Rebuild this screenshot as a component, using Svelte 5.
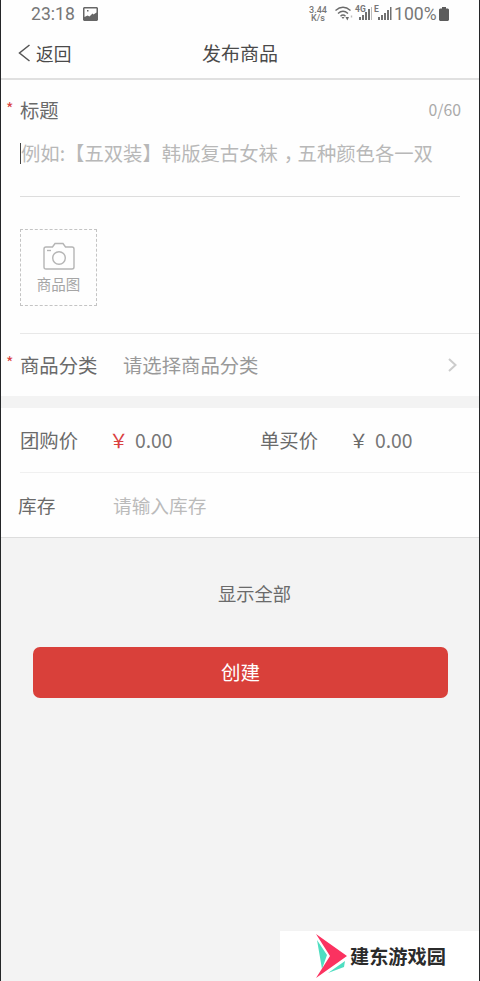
<script lang="ts">
  let title = $state("");
  const maxLength = 60;
</script>

<div class="screen">
  <div class="status">
    <span class="clock">23:18</span>
    <svg class="photo" width="15" height="14" viewBox="0 0 15 14">
      <path fill="#666" fill-rule="evenodd" d="M1 0h13l1 1v12l-1 1H1l-1-1V1zM1.500 1.500v8.500l3-1.500 2 1 3-3 1 1 3-2v-4zM4 3h1.500v1.500H4z" />
    </svg>
    <span class="speed"><span>3.44</span><span>K/s</span></span>
    <svg class="wifi" width="19" height="15" viewBox="0 0 19 15" fill="none" stroke="#6a6a6a" stroke-width="1.4">
      <path d="M.5 4.500Q8-2 15.500 4.500M3 7.500Q8 3 13 7.500M5.500 10.200Q8 7.800 10.500 10.200" />
      <path d="M6.500 11h3L8 13zM10.500 11h3.500l-1.700 3.500z" fill="#6a6a6a" stroke="none" />
      <path d="M16.500 9.500v2" stroke="#bbb" />
    </svg>
    <span class="signal first">
      <span class="net">4G</span>
      <svg width="14" height="13" viewBox="0 0 14 13" fill="#707070">
        <path d="M0 10h2v3H0zM3 8h2v5H3zM6 5h2v8H6zM9 2h2v11H9z" />
        <path d="M12 0h1v13h-1z" fill="#bbb" />
      </svg>
    </span>
    <span class="signal">
      <span class="net">E</span>
      <svg width="14" height="13" viewBox="0 0 14 13" fill="#707070">
        <path d="M0 10h2v3H0zM3 8h2v5H3zM6 6h2v7H6zM9 3h2v10H9zM12 0h1.500v13H12z" />
      </svg>
    </span>
    <span class="percent">100%</span>
    <svg class="battery" width="10" height="14" viewBox="0 0 10 14">
      <path fill="#5c5c5c" d="M3 0h4v1.500h2l1 1V13l-1 1H1l-1-1V2.500l1-1h2z" />
    </svg>
  </div>

  <header class="nav">
    <button class="back" type="button">
      <svg width="13" height="18" viewBox="0 0 13 18" fill="none" stroke="#555" stroke-width="1.5">
        <path d="M11.500 1 1.500 9l10 8" />
      </svg>
      返回
    </button>
    <h1>发布商品</h1>
  </header>

  <section class="details">
    <div class="title-row">
      <span class="star">*</span>
      <span class="label">标题</span>
      <span class="count">{title.length}/{maxLength}</span>
    </div>
    <div class="title-field">
      <span class="caret"></span>例如:【五双装】韩版复古女袜<span class="comma">，</span>五种颜色各一双
    </div>
    <button class="upload" type="button">
      <svg width="32" height="28" viewBox="0 0 32 28" fill="none" stroke="#b5b5b5" stroke-width="1.4">
        <path d="M3 5h6.500l2.500-3.500h8L22.500 5H29q2 0 2 2v18q0 2-2 2H3q-2 0-2-2V7q0-2 2-2z" />
        <circle cx="16" cy="16" r="6.300" />
        <path d="M4 8.500h4" />
      </svg>
      商品图
    </button>
  </section>

  <div class="category">
    <span class="star">*</span>
    <span class="label">商品分类</span>
    <span class="value">请选择商品分类</span>
    <svg width="11" height="14" viewBox="0 0 11 14" fill="none" stroke="#ccc" stroke-width="2">
      <path d="m2 1 6.500 6L2 13" />
    </svg>
  </div>

  <section class="pricing">
    <div class="prices">
      <div class="price">
        <span class="label">团购价</span>
        <span class="yen red">￥</span>
        <span class="amount">0.00</span>
      </div>
      <div class="price">
        <span class="label">单买价</span>
        <span class="yen">￥</span>
        <span class="amount">0.00</span>
      </div>
    </div>
    <div class="stock">
      <span class="stock-label">库存</span>
      <span class="hint">请输入库存</span>
    </div>
  </section>

  <button class="show-all" type="button">显示全部</button>
  <button class="create" type="button">创建</button>

  <div class="brand">
    <svg width="34" height="46" viewBox="0 0 34 46">
      <path fill="#4fdec1" d="M2 7 12 22 7 36zM13 40l17-12-1 6z" />
      <path fill="#fb3260" d="M1 1 32 23 1 45l14-22z" />
    </svg>
    <span>建东游戏园</span>
  </div>
</div>

<style>
  :global(body) {
    background: #f3f3f3;
  }

  .screen {
    position: relative;
    box-sizing: border-box;
    height: 981px;
    border: solid #242628;
    border-width: 0 1px;
    background: #f3f3f3;
    overflow: hidden;
    font-family: "Noto Sans CJK SC", sans-serif;
    font-size: 19.35px;
    line-height: 28px;
    color: #6a6a6a;
    white-space: nowrap;
  }

  button {
    margin: 0;
    padding: 0;
    border: 0;
    background: none;
    font: inherit;
    color: inherit;
  }

  .status {
    display: flex;
    align-items: center;
    box-sizing: border-box;
    height: 27px;
    padding-left: 30px;
    background: #fefefe;
    font-family: Roboto, sans-serif;
    color: #777;
  }

  .clock {
    width: 52px;
    font-size: 17.6px;
  }

  .speed {
    display: flex;
    flex-direction: column;
    align-items: center;
    width: 20px;
    margin: 0 7px 0 210px;
    font-size: 9px;
    font-weight: 500;
  }

  .speed span {
    height: 8px;
    line-height: 8px;
  }

  .signal {
    display: flex;
    align-items: flex-end;
    position: relative;
    width: 20px;
    padding-left: 4px;
    box-sizing: border-box;
  }

  .signal.first {
    width: 19px;
    margin-left: 1px;
  }

  .net {
    position: absolute;
    left: 0;
    top: -2px;
    font-size: 8.5px;
    line-height: 9px;
    font-weight: 700;
  }

  .percent {
    width: 45px;
    font-size: 17.6px;
  }

  .nav {
    display: grid;
    grid-template-columns: 1fr auto 1fr;
    align-items: center;
    box-sizing: border-box;
    height: 53px;
    padding-left: 17px;
    padding-right: 17px;
    border-bottom: 2px solid #e0e0e0;
    background: #fefefe;
    color: #4a4a4a;
  }

  .back {
    display: flex;
    align-items: center;
    gap: 5px;
    font-size: 17.7px;
  }

  h1 {
    margin: 0;
    font-size: 19px;
    font-weight: 400;
  }

  .details {
    height: 253px;
    background: #fefefe;
  }

  .title-row {
    display: flex;
    align-items: center;
    height: 60px;
    padding-right: 18px;
  }

  .star {
    box-sizing: border-box;
    width: 19px;
    padding: 0 0 5px 5px;
    font-size: 16px;
    line-height: 20px;
    color: #d94040;
  }

  .count {
    margin-left: auto;
    font-size: 15.8px;
    color: #aaa;
  }

  .title-field {
    display: flex;
    align-items: center;
    box-sizing: border-box;
    height: 57px;
    margin: 0 19px;
    padding-bottom: 30px;
    border-bottom: 1px solid #ddd;
    color: #b8b8b8;
  }

  .caret {
    width: 1px;
    height: 21px;
    background: #444;
  }

  .comma {
    margin: 0 4px 0 6px;
    font-feature-settings: "halt";
  }

  .upload {
    display: flex;
    flex-direction: column;
    align-items: center;
    box-sizing: border-box;
    width: 77px;
    height: 77px;
    margin: 32px 0 0 19px;
    padding-top: 12px;
    border: 1px dashed #c4c4c4;
    font-size: 14.5px;
    color: #a5a5a5;
  }

  .category {
    display: flex;
    align-items: center;
    position: relative;
    height: 63px;
    background: #fefefe;
  }

  .category::before {
    content: "";
    position: absolute;
    inset: 0 0 auto 19px;
    height: 1px;
    background: #e8e8e8;
  }

  .category .label {
    width: 103px;
  }

  .value {
    color: #999;
  }

  .category svg {
    margin: 0 21px 0 auto;
  }

  .pricing {
    margin-top: 12px;
    border-bottom: 1px solid #ddd;
    background: #fefefe;
  }

  .prices {
    display: grid;
    grid-template-columns: 240px 1fr;
    height: 64px;
    margin-left: 19px;
    border-bottom: 1px solid #f0f0f0;
  }

  .price {
    display: flex;
    align-items: center;
  }

  .price .label {
    width: 89px;
  }

  .yen {
    width: 26px;
  }

  .red {
    color: #d94040;
  }

  .amount {
    color: #777;
  }

  .stock {
    display: flex;
    align-items: center;
    height: 64px;
    padding-left: 17px;
    font-size: 18.7px;
  }

  .stock-label {
    width: 95px;
  }

  .hint {
    color: #bbb;
  }

  .show-all {
    display: block;
    margin: 41px auto 0 217px;
    font-size: 18.3px;
    line-height: 28px;
  }

  .create {
    display: block;
    width: 415px;
    height: 51px;
    margin: 40px 0 0 32px;
    padding-bottom: 2px;
    border-radius: 7px;
    background: #d9403a;
    font-size: 19.5px;
    color: #fff;
  }

  /* Logo strip laid over the bottom right corner */
  .brand {
    position: absolute;
    right: -1px;
    bottom: 0;
    display: flex;
    align-items: center;
    gap: 1px;
    box-sizing: border-box;
    width: 200px;
    height: 50px;
    padding-left: 35px;
    background: #fff;
    font-size: 19.2px;
    font-weight: 700;
    color: #2b2b2b;
  }
</style>
